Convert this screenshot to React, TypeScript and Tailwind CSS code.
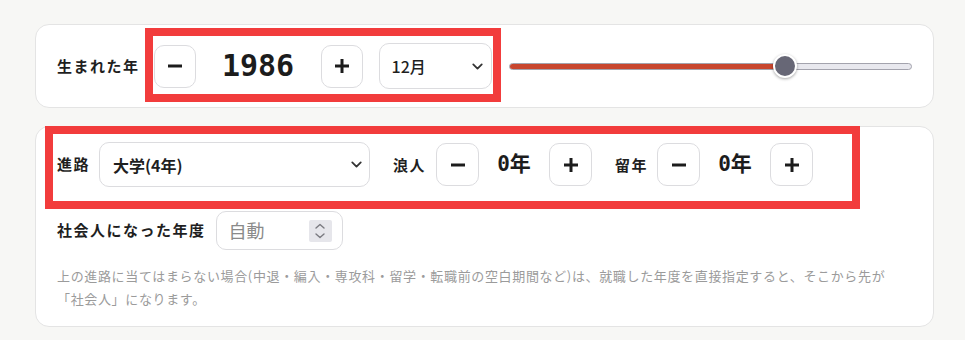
import React from "react";
import { ChevronDown } from "lucide-react";

const JP = { fontFamily: '"Noto Sans CJK JP", "Noto Sans", sans-serif' };
const MONO = { fontFamily: '"DejaVu Sans Mono", "Noto Sans CJK JP", monospace' };

function MinusIcon() {
  return (
    <svg width="16" height="16" viewBox="0 0 16 16">
      <line x1="1" y1="8" x2="15" y2="8" stroke="#1c1c1c" strokeWidth="3" />
    </svg>
  );
}
function PlusIcon() {
  return (
    <svg width="16" height="16" viewBox="0 0 16 16">
      <line x1="1" y1="8" x2="15" y2="8" stroke="#1c1c1c" strokeWidth="3" />
      <line x1="8" y1="1" x2="8" y2="15" stroke="#1c1c1c" strokeWidth="3" />
    </svg>
  );
}

function SpinIcon() {
  return (
    <svg width="12" height="18" viewBox="0 0 12 18" fill="none" stroke="#7a7a80" strokeWidth="1.4" strokeLinecap="round" strokeLinejoin="round">
      <polyline points="2,6 6,2.5 10,6" />
      <polyline points="2,12 6,15.5 10,12" />
    </svg>
  );
}

function StepBtn({ kind, w = 43 }: { kind: "minus" | "plus"; w?: 42 | 43 }) {
  return (
    <button
      className={
        (w === 42 ? "w-[42px] " : "w-[43px] ") +
        "flex h-[43px] shrink-0 items-center justify-center rounded-[10px] border border-[#dcdcdf] bg-white"
      }
    >
      {kind === "minus" ? <MinusIcon /> : <PlusIcon />}
    </button>
  );
}

function Label({ children }: { children: React.ReactNode }) {
  return (
    <span className="shrink-0 whitespace-nowrap text-[15px] font-bold tracking-[0.1em] text-[#1f1f1f]" style={JP}>
      {children}
    </span>
  );
}

export default function App() {
  return (
    <div className="min-h-[340px] w-full bg-[#f7f7f5] pl-[35px] pr-[31px] pt-[24px]" style={JP}>
      {/* Card 1 */}
      <div className="relative flex h-[84px] items-center rounded-[14px] border border-[#e4e4e4] bg-white pl-[21px] pr-[21px]">
        <Label>生まれた年</Label>
        <div className="ml-[14px]">
          <StepBtn kind="minus" w={42} />
        </div>
        <div className="w-[125px] text-center text-[30px] font-bold leading-none text-[#1c1c1c]" style={MONO}>
          1986
        </div>
        <StepBtn kind="plus" w={42} />
        <div className="ml-[16px] flex h-[46px] w-[113px] shrink-0 items-center justify-between rounded-[10px] border border-[#dcdcdf] bg-white pl-[12px] pr-[5px]">
          <span className="text-[16px] font-medium text-[#1f1f1f]">12月</span>
          <ChevronDown size={17} strokeWidth={2.5} color="#333" />
        </div>
        <div className="relative ml-[17px] h-[7px] flex-1">
          <div className="flex h-full w-full overflow-hidden rounded-full border border-[#a3a3ad] bg-[#e8e8ee]">
            <div className="h-full bg-[#c8462e]" style={{ width: "68.5%" }} />
          </div>
          <div
            className="absolute top-1/2 h-[24px] w-[24px] -translate-x-1/2 -translate-y-1/2 rounded-full border-[2.5px] border-white bg-[#676776] shadow-[0_1px_3px_rgba(0,0,0,0.35)]"
            style={{ left: "68.5%" }}
          />
        </div>
        <div className="pointer-events-none absolute left-[109px] top-[3px] h-[74px] w-[356px] border-[8px] border-[#f23c3c]" />
      </div>

      {/* Card 2 */}
      <div className="relative mt-[18px] rounded-[14px] border border-[#e4e4e4] bg-white pb-[16px] pl-[21px] pr-[21px] pt-[15px]">
        <div className="flex h-[45px] items-center">
          <Label>進路</Label>
          <div className="ml-[9px] flex h-[45px] w-[271px] shrink-0 items-center justify-between rounded-[10px] border border-[#dcdcdf] bg-white pl-[13px] pr-[4px]">
            <span className="text-[16px] font-bold text-[#1f1f1f]">大学(4年)</span>
            <ChevronDown size={17} strokeWidth={2.5} color="#333" />
          </div>
          <div className="ml-[23px]">
            <Label>浪人</Label>
          </div>
          <div className="ml-[10px]">
            <StepBtn kind="minus" />
          </div>
          <div className="w-[70px] text-center text-[21px] font-bold text-[#1c1c1c]" style={MONO}>
            0年
          </div>
          <StepBtn kind="plus" />
          <div className="ml-[23px]">
            <Label>留年</Label>
          </div>
          <div className="ml-[9px]">
            <StepBtn kind="minus" />
          </div>
          <div className="w-[70px] text-center text-[21px] font-bold text-[#1c1c1c]" style={MONO}>
            0年
          </div>
          <StepBtn kind="plus" />
        </div>

        <div className="mt-[24px] flex h-[39px] items-center">
          <Label>社会人になった年度</Label>
          <div className="ml-[10px] flex h-[39px] w-[127px] shrink-0 items-center justify-between rounded-[10px] border border-[#dcdcdf] bg-white pl-[12px] pr-[10px]">
            <span className="text-[18px] text-[#8a8a8a]">自動</span>
            <div className="flex h-[22px] w-[23px] items-center justify-center rounded-[2px] bg-[#e6e6eb]">
              <SpinIcon />
            </div>
          </div>
        </div>

        <p className="mt-[14px] text-[13px] leading-[23px] tracking-[0.05em] text-[#9b9b9b]">
          上の進路に当てはまらない場合(中退・編入・専攻科・留学・転職前の空白期間など)は、就職した年度を直接指定すると、そこから先が
          <br />
          「社会人」になります。
        </p>

        <div className="pointer-events-none absolute left-[9px] top-[-1px] h-[83px] w-[815px] border-[8px] border-[#f23c3c]" />
      </div>
    </div>
  );
}
